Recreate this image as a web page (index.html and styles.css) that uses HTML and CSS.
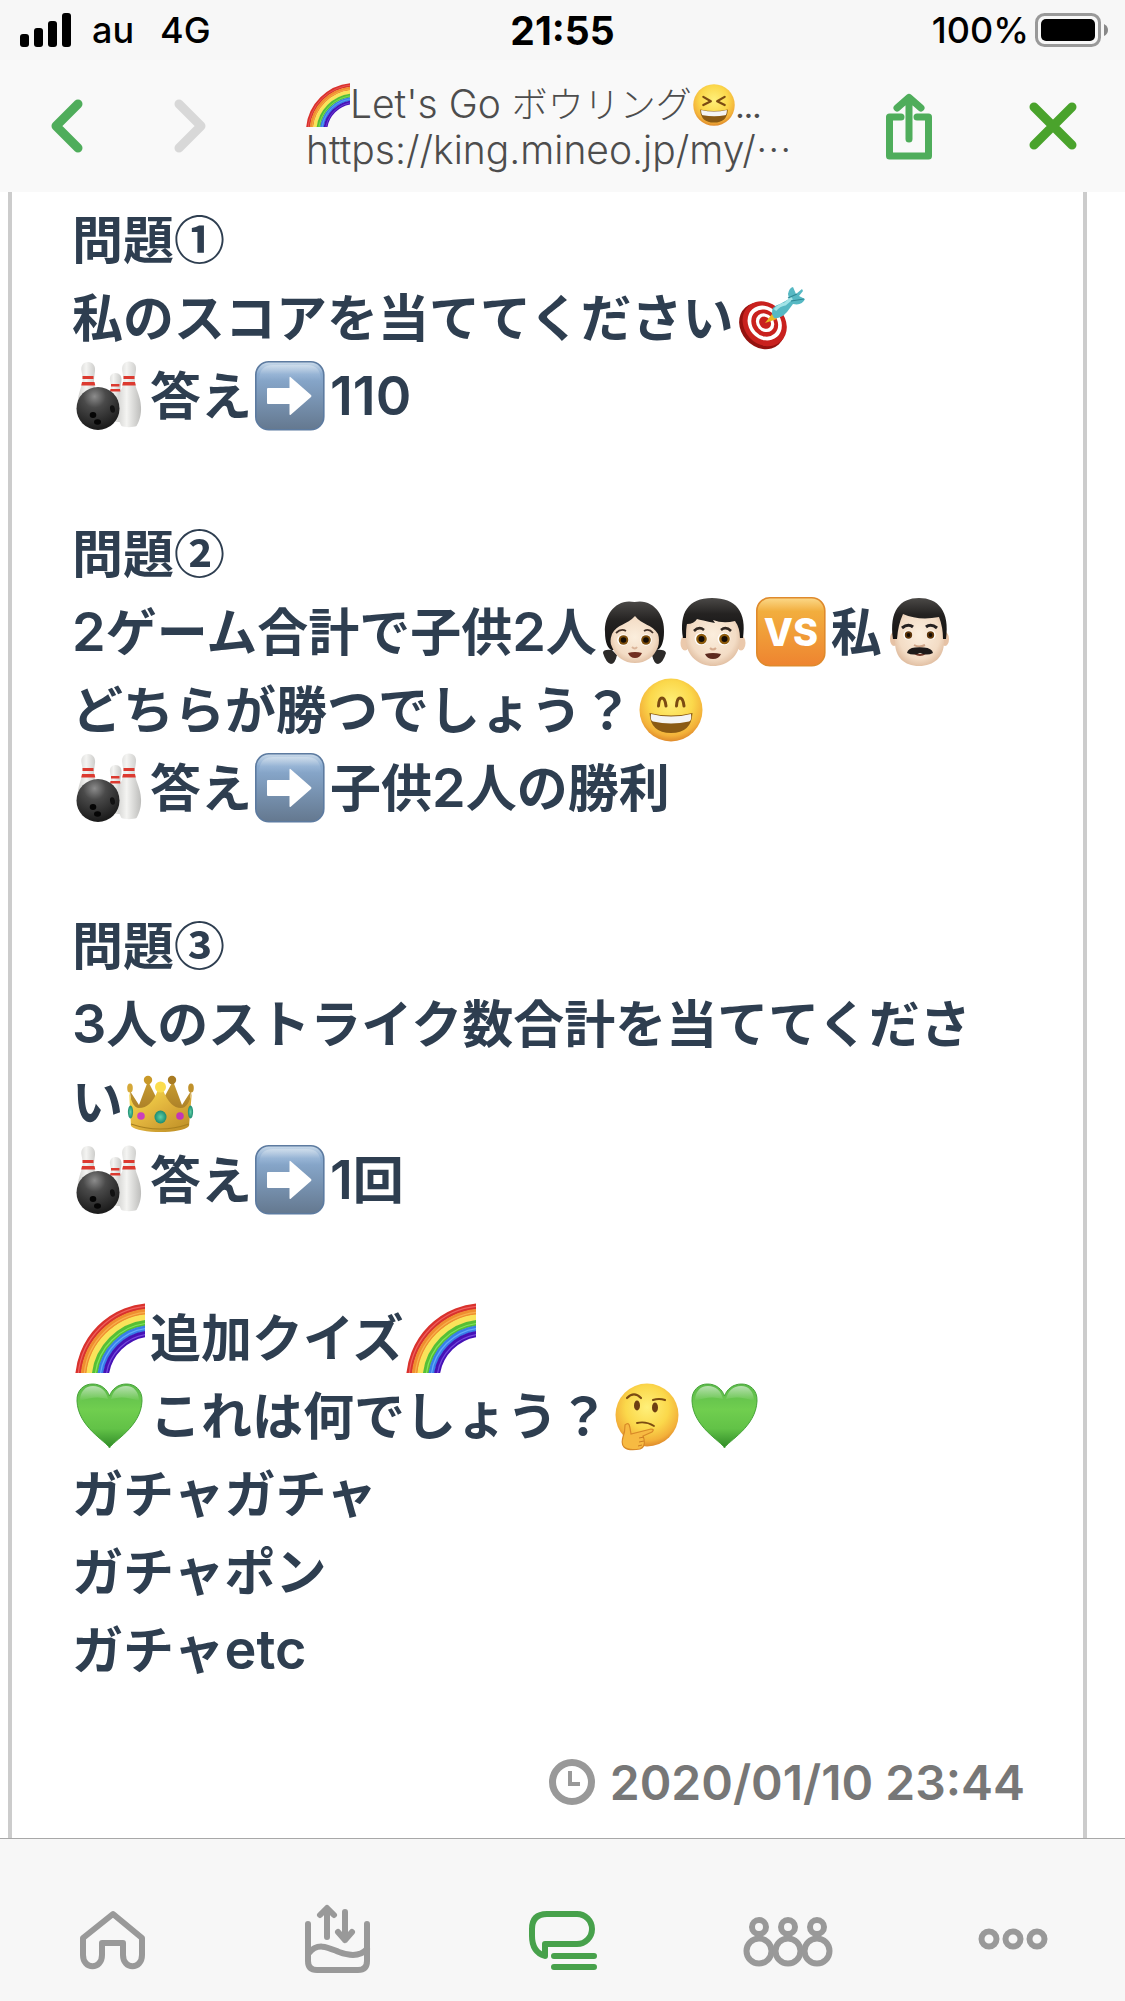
FILE: index.html
```html
<!DOCTYPE html>
<html lang="ja">
<head>
    <meta charset="UTF-8">
    <meta name="viewport" content="width=device-width, initial-scale=1.0">
    <title>Let's Go ボウリング</title>
    <link rel="stylesheet" href="styles.css">
</head>
<body>

    <!-- Emoji sprite -->
    <svg class="sprite" aria-hidden="true">
        <defs>
            <linearGradient id="gPin" x1="0" x2="1"><stop offset="0" stop-color="#d2d2d0"/><stop offset=".4" stop-color="#f4f4f2"/><stop offset="1" stop-color="#bdbdbb"/></linearGradient>
            <radialGradient id="gBall" cx=".42" cy=".22" r=".75"><stop offset="0" stop-color="#8c8c8c"/><stop offset=".35" stop-color="#4a4a4a"/><stop offset="1" stop-color="#1c1c1c"/></radialGradient>
            <linearGradient id="gBlue" x2="0" y2="1"><stop offset="0" stop-color="#cbdbea"/><stop offset=".18" stop-color="#8aabd0"/><stop offset="1" stop-color="#64788f"/></linearGradient>
            <linearGradient id="gOrange" x2="0" y2="1"><stop offset="0" stop-color="#fbd98a"/><stop offset=".2" stop-color="#f2ae3e"/><stop offset="1" stop-color="#ee8430"/></linearGradient>
            <radialGradient id="gFace" cx=".5" cy=".38" r=".62"><stop offset="0" stop-color="#fff07a"/><stop offset=".55" stop-color="#fbd84b"/><stop offset=".85" stop-color="#f3b13a"/><stop offset="1" stop-color="#df8a2b"/></radialGradient>
            <radialGradient id="gSkin" cx=".5" cy=".45" r=".6"><stop offset="0" stop-color="#fbeedd"/><stop offset=".7" stop-color="#f3dcc5"/><stop offset="1" stop-color="#dcb799"/></radialGradient>
            <linearGradient id="gHair" x2="0" y2="1"><stop offset="0" stop-color="#4b4947"/><stop offset=".4" stop-color="#242221"/><stop offset="1" stop-color="#131212"/></linearGradient>
            <linearGradient id="gHeart" x2="0" y2="1"><stop offset="0" stop-color="#5cba4b"/><stop offset=".4" stop-color="#70ce4f"/><stop offset=".7" stop-color="#62c247"/><stop offset="1" stop-color="#2f8a27"/></linearGradient>
            <linearGradient id="gShine" x2="0" y2="1"><stop offset="0" stop-color="#fff" stop-opacity=".8"/><stop offset="1" stop-color="#fff" stop-opacity="0"/></linearGradient>
            <linearGradient id="gGold" x2="1" y2="1"><stop offset="0" stop-color="#fbe04e"/><stop offset=".5" stop-color="#dfb13c"/><stop offset="1" stop-color="#b98a22"/></linearGradient>
            <linearGradient id="gGoldDark" x2="0" y2="1"><stop offset="0" stop-color="#c99d31"/><stop offset="1" stop-color="#9c7123"/></linearGradient>
            <radialGradient id="gGem"><stop offset="0" stop-color="#5fd0a8"/><stop offset="1" stop-color="#1d8b70"/></radialGradient>
        </defs>

        <symbol id="bowling" viewBox="0 0 70 70">
            <g fill="url(#gPin)">
                <path d="M13 1C8 1 5.500 5 6.500 10c.7 4 1.500 7 1 11C6 28 2 34 3 46c.5 7 2 12 4 17h13c3-8 5-18 3-27-1.500-6-4-10-4-15s.5-7 1-11c.7-5-2-9-7-9z"/>
                <path d="M40.500 12c-4 0-6 3-5.500 7 .5 3 1.200 6 .8 9-1 6-4.800 12-3.800 21 .5 6 2 10 3 12h10c3-5 4-12 3-19-1-6-3-10-2.500-15 .3-3 .8-5 1-8 .3-4-2-7-6-7z"/>
                <path d="M54 .5c-5 0-7.500 4-6.800 9 .6 5 1.800 8 1 13C47 29 42 35 42 47c0 8 2.500 14 4.500 18 3 1.500 12 1.500 15 0 2.500-4 5-11 4.500-19-.4-11-5-17-6-24-.6-5 .4-8 1-13 .6-5-2-8.500-7-8.500z"/>
            </g>
            <path d="M7.500 15h11v3h-11zM7 21h12.500l.8 3.500H6.200zM36 23h8.500v2.500H36zM35.500 28h9.500l.5 2.500H35zM48.500 15h11v3h-11zM48 21h12l.8 3.500H47.200z" fill="#dc3a30"/>
            <circle cx="23" cy="47.500" r="21.500" fill="url(#gBall)"/>
            <ellipse cx="18" cy="54" rx="3.300" ry="3" fill="#050505"/><ellipse cx="22.500" cy="61" rx="3.500" ry="2.700" fill="#050505"/><ellipse cx="37.500" cy="48" rx="2.400" ry="3.800" fill="#111" transform="rotate(-12 37.500 48)"/>
        </symbol>

        <symbol id="arrow" viewBox="0 0 70 70">
            <rect x=".8" y=".8" width="68" height="68" rx="13" fill="url(#gBlue)" stroke="#5d7ba0" stroke-width="1.600"/>
            <path d="M4 20Q4 4 18 4h34q14 0 14 16z" fill="url(#gShine)" opacity=".35"/>
            <path d="M13 27h21.500V17q0-2 1.500-.5L56 34q1 1 0 2L36 53.500q-1.500 1.300-1.500-.5V43H13q-1 0-1-1V28q0-1 1-1z" fill="#fff"/>
        </symbol>

        <symbol id="target" viewBox="0 0 70 70">
            <ellipse cx="26" cy="43" rx="21" ry="25" fill="#94120f" transform="rotate(-42 26 43)"/>
            <g transform="translate(1 5) rotate(-42 27 35)">
                <ellipse cx="27" cy="36" rx="20.500" ry="24" fill="#c9211e"/>
                <ellipse cx="27.500" cy="35.500" rx="16" ry="18.500" fill="#fff"/>
                <ellipse cx="27.500" cy="35.500" rx="12.500" ry="14.500" fill="#c9211e"/>
                <ellipse cx="28" cy="35.500" rx="8.500" ry="10" fill="#fff"/>
                <ellipse cx="28" cy="35.500" rx="5.500" ry="6.500" fill="#c9211e"/>
            </g>
            <path d="M29 40l7-9 5 5z" fill="#e9b824"/>
            <path d="M36 31q-1-8 8-10l9-5-1-5q1-6 5-7l3 7 6-5 1 2-4 5 6 3q-3 7-12 5l-6 8q-6 7-13 6z" fill="#56b8c3"/>
            <path d="M39 27q4-5 10-6l7-6" stroke="#a2e4e7" stroke-width="3" fill="none"/>
            <path d="M52 15l9-4M55 18l13-2" stroke="#2e8995" stroke-width="1.200"/>
        </symbol>

        <symbol id="rainbow" viewBox="0 0 70 70">
            <g fill="none" stroke-width="6">
                <circle cx="78" cy="78" r="75" stroke="#d9322d"/>
                <circle cx="78" cy="78" r="69.500" stroke="#ef8f2f"/>
                <circle cx="78" cy="78" r="64" stroke="#fae35a"/>
                <circle cx="78" cy="78" r="58.500" stroke="#56bf35"/>
                <circle cx="78" cy="78" r="53" stroke="#377fe8"/>
                <circle cx="78" cy="78" r="47.500" stroke="#4612b6"/>
                <g stroke-width="1.200">
                    <circle cx="78" cy="78" r="75" stroke="#ee605f"/>
                    <circle cx="78" cy="78" r="69" stroke="#f8b04e"/>
                    <circle cx="78" cy="78" r="58" stroke="#82e55b"/>
                    <circle cx="78" cy="78" r="53" stroke="#64a8fa"/>
                    <circle cx="78" cy="78" r="47" stroke="#7648dd"/>
                </g>
            </g>
        </symbol>

        <symbol id="heart" viewBox="0 0 70 70">
            <path d="M34.500 67C31 60 3 46 2 20 1.500 9 9 3 17.500 3 26 3 32 8 34.500 15 37 8 43 3 51.500 3 60 3 67.500 9 67 20 66 46 38 60 34.500 67z" fill="url(#gHeart)" stroke="#46a338" stroke-width="1"/>
            <path d="M5 20C5 11 10 5 18 5s13 5 15 13q-13-4-28 2zM64 20C64 11 59 5 51 5s-13 5-15 13q13-4 28 2z" fill="url(#gShine)" opacity=".7"/>
        </symbol>

        <symbol id="grin" viewBox="0 0 70 70">
            <circle cx="35" cy="35" r="31.500" fill="url(#gFace)"/>
            <path d="M22.500 31q.5-8 3.500-8t4 8M40.500 31q.5-8 3.500-8t4 8" fill="none" stroke="#7b4b12" stroke-width="3" stroke-linecap="round"/>
            <path d="M13.500 38q21.500 5 43 0-1 20-21.500 20T13.500 38z" fill="#8a5a14"/>
            <path d="M15 39q20 5 40 0 1 7-2 7.500-18 4-36 0-3-.5-2-7.500z" fill="#f4f4f4"/>
        </symbol>

        <symbol id="laugh" viewBox="0 0 70 70">
            <circle cx="35" cy="35" r="33" fill="url(#gFace)"/>
            <path d="M18 22l12 7-12 6M52 22l-12 7 12 6" fill="none" stroke="#7b4b12" stroke-width="3.500" stroke-linecap="round" stroke-linejoin="round"/>
            <path d="M13 42q22 5 44 0-1 21-22 21T13 42z" fill="#8a5a14"/>
            <path d="M14.500 43q20.500 5 41 0 0 8-3 8.500-17 3-35 0-3-.5-3-8.500z" fill="#f4f4f4"/>
        </symbol>

        <symbol id="think" viewBox="0 0 70 70">
            <circle cx="35" cy="34" r="31.500" fill="url(#gFace)"/>
            <path d="M15 17q7-7 14 0M41 19q6-2 12 0" fill="none" stroke="#7b4b12" stroke-width="2.200" stroke-linecap="round"/>
            <ellipse cx="25" cy="24.500" rx="3" ry="5" fill="#6d3e12"/><ellipse cx="43" cy="26.500" rx="3" ry="5" fill="#6d3e12"/>
            <path d="M25 42q9-2 17 3" fill="none" stroke="#7b4b12" stroke-width="1.800" stroke-linecap="round"/>
            <path d="M13 44q4-4 5 3l1 6 20-5q4 0 1 3l-9 4q4 10-3 13-12 2-16-2-3-3-1-10 2-5 2-12z" fill="#f7ba42" stroke="#d88a28" stroke-width="1.200"/>
            <path d="M27 57l5-1M27 61l5-1M26 65l4-1" stroke="#cc7d25" stroke-width="1"/>
        </symbol>

        <symbol id="girl" viewBox="0 0 70 70">
            <path d="M12 53Q3 52 3 56q3 10 8 11 4 0 6-9zM56 53q9-1 10 3-3 10-8 11-4 0-6-9z" fill="#2c2a29"/>
            <path d="M34.500 5C16 1 4 18 5 35c0 11 3 17 7 18h45c4-1 7-8 7-18C65 18 53 1 34.500 5z" fill="url(#gHair)"/>
            <path d="M35 19C27 28 17 27 12 37q-3 8 0 13c4 10 12 16 23 16s19-6 23-16q2-7 0-13C52 27 42 28 35 19z" fill="url(#gSkin)"/>
            <path d="M16 36q5-5 10-2M44 34q5-3 9 2" stroke="#44332a" stroke-width="1.800" fill="none"/>
            <circle cx="23" cy="43" r="5.800" fill="#fff"/><circle cx="46" cy="43" r="5.800" fill="#fff"/>
            <circle cx="23.500" cy="43" r="4.800" fill="#7b4c0a"/><circle cx="46" cy="43" r="4.800" fill="#7b4c0a"/>
            <circle cx="23.500" cy="43" r="2.800" fill="#140c04"/><circle cx="46" cy="43" r="2.800" fill="#140c04"/>
            <path d="M32 50q3 3 5 0" stroke="#dbb59a" stroke-width="2" fill="none"/>
            <path d="M28 56q7-2 14 0-2 5-7 5t-7-5z" fill="#712e20"/>
        </symbol>

        <symbol id="boy" viewBox="0 0 70 70">
            <ellipse cx="7" cy="46" rx="4.500" ry="7.500" fill="#ebc9ac"/><ellipse cx="63" cy="46" rx="4.500" ry="7.500" fill="#ebc9ac"/>
            <path d="M8 33C8 20 20 12 35 12s27 8 27 21v10c0 16-13 26-27 26S8 59 8 43z" fill="url(#gSkin)"/>
            <path d="M5 41C1 16 10 1 34 1s35 14 31 40h-3q0-10-5-17-12 3-22-1l2 3q-14-3-18-4-3 5-10 5-1 4-1 14z" fill="url(#gHair)"/>
            <path d="M16 34q5-5 10-1M43 33q5-4 10 1" stroke="#322822" stroke-width="2.600" fill="none"/>
            <circle cx="23" cy="42" r="6.300" fill="#fff"/><circle cx="46" cy="42" r="6.300" fill="#fff"/>
            <circle cx="23.500" cy="42" r="5.300" fill="#8c5a0b"/><circle cx="46.500" cy="42" r="5.300" fill="#8c5a0b"/>
            <circle cx="23.500" cy="42" r="3" fill="#140c04"/><circle cx="46.500" cy="42" r="3" fill="#140c04"/>
            <path d="M32 51q3 3 6 0" stroke="#d6ac8f" stroke-width="2" fill="none"/>
            <path d="M27 57q8-2 16 0-2 5-8 5t-8-5z" fill="#5c2a1f"/>
        </symbol>

        <symbol id="man" viewBox="0 0 70 70">
            <ellipse cx="9" cy="42" rx="4" ry="7" fill="#e6c2a5"/><ellipse cx="60" cy="42" rx="4" ry="7" fill="#e6c2a5"/>
            <path d="M10 25q2-13 24-13t25 13v20c0 15-10 24-25 24S10 60 10 45z" fill="url(#gSkin)"/>
            <path d="M8 42C4 14 15 1 34 1s31 13 27 41h-3q0-12-4-22-20 4-36-3-5 11-6 25z" fill="url(#gHair)"/>
            <path d="M17 31q6-5 11-1M41 30q5-4 11 1" stroke="#262120" stroke-width="3" fill="none"/>
            <circle cx="23" cy="38" r="4.600" fill="#fff"/><circle cx="46" cy="38" r="4.600" fill="#fff"/>
            <circle cx="23.500" cy="38" r="3.700" fill="#61370a"/><circle cx="45.500" cy="38" r="3.700" fill="#61370a"/>
            <circle cx="23.500" cy="38" r="1.900" fill="#140c04"/><circle cx="45.500" cy="38" r="1.900" fill="#140c04"/>
            <path d="M29 48q5 3 11 0" stroke="#cda386" stroke-width="2" fill="none"/>
            <path d="M29 57q6 4 12 0z" fill="#6c3526"/>
            <path d="M22 56q1-5 8-5.500 5-.5 9 0Q47 51 48 56q-6 3-13 0-6 3-13 0z" fill="#1d1a19"/>
        </symbol>

        <symbol id="crown" viewBox="0 0 70 70">
            <g transform="translate(0 7)">
                <path d="M4 17l9 14 9-24 12 24L47 7l9 24 9-14-3 33H7z" fill="url(#gGoldDark)"/>
                <circle cx="22" cy="6" r="4.200" fill="#c99928"/><circle cx="46" cy="6" r="4.200" fill="#a87b22"/>
                <ellipse cx="4" cy="14" rx="2.800" ry="4.500" fill="#d5a838"/><ellipse cx="65" cy="14" rx="2.800" ry="4.500" fill="#c0912b"/>
                <path d="M3 17q3 17 10 17 12 0 19-18h5q7 18 18 18 8 0 11-17l-3 35c-7 8-50 8-58 0z" fill="url(#gGold)"/>
                <circle cx="34.500" cy="13" r="5.500" fill="#fbdd4e"/>
                <path d="M5 50q29 10 58 0" stroke="#a9801f" stroke-width="1.200" fill="none"/>
                <ellipse cx="34.500" cy="43" rx="6" ry="6.500" fill="url(#gGem)"/>
                <ellipse cx="4.500" cy="38" rx="2.600" ry="6.500" fill="url(#gGem)"/><ellipse cx="64.500" cy="38" rx="2.600" ry="6.500" fill="url(#gGem)"/>
                <circle cx="15" cy="42" r="3.800" fill="#cc3fbd"/><circle cx="54" cy="42" r="3.800" fill="#c336b6"/>
            </g>
        </symbol>
    </svg>

    <!-- Status bar -->
    <div class="status-bar">
        <div class="status-left">
            <svg class="signal" viewBox="0 0 52 34" aria-hidden="true">
                <rect x="0" y="21" width="9" height="13" rx="3"/>
                <rect x="14" y="15" width="9" height="19" rx="3"/>
                <rect x="28" y="8" width="9" height="26" rx="3"/>
                <rect x="42" y="0" width="9" height="34" rx="3"/>
            </svg>
            <span class="carrier">au</span>
            <span>4G</span>
        </div>
        <div class="clock">21:55</div>
        <div class="status-right">
            <span>100%</span>
            <svg class="battery" viewBox="0 0 74 34" aria-hidden="true">
                <rect x="1.500" y="1.500" width="63" height="31" rx="8" fill="none" stroke="#999" stroke-width="3"/>
                <rect x="6" y="6" width="54" height="22" rx="5"/>
                <path d="M69 11q4 2 4 6t-4 6z" fill="#888"/>
            </svg>
        </div>
    </div>

    <!-- Browser bar -->
    <header class="nav-bar">
        <button type="button" class="nav-button" aria-label="戻る">
            <svg width="34" height="58" viewBox="0 0 34 58"><path d="M28 7L6 29l22 22" stroke="#4fad5b"/></svg>
        </button>
        <button type="button" class="nav-button" aria-label="進む" disabled>
            <svg width="34" height="58" viewBox="0 0 34 58"><path d="M5 7l22 22L5 51" stroke="#d8d8d8"/></svg>
        </button>
        <div class="page-info">
            <h1 class="page-title"><svg class="mini-emoji" role="img" aria-label="虹"><use href="#rainbow"/></svg><span class="latin">Let's Go </span>ボウリング<svg class="mini-emoji" role="img" aria-label="笑顔"><use href="#laugh"/></svg><b>…</b></h1>
            <p class="page-url"><span class="latin">https://king.mineo.jp/my/</span><span class="cjk">…</span></p>
        </div>
        <button type="button" class="nav-button wide" aria-label="共有">
            <svg width="48" height="68" viewBox="0 0 48 68">
                <path class="share" d="M16 25H4.500v39h39V25H32M24 47V6M12 16L24 5.500 36 16" stroke="#4fad5b"/>
            </svg>
        </button>
        <button type="button" class="nav-button wide" aria-label="閉じる">
            <svg width="50" height="50" viewBox="0 0 50 50"><path d="M6 6l38 38M44 6L6 44" stroke="#4aa32c"/></svg>
        </button>
    </header>

    <main class="content">
        <article class="post">
            <p>
                問題<span class="cjk">①</span><br>
                私のスコアを当ててください<svg class="emoji" role="img" aria-label="的"><use href="#target"/></svg><br>
                <svg class="emoji" role="img" aria-label="ボウリング"><use href="#bowling"/></svg>答え<svg class="emoji" role="img" aria-label="右矢印"><use href="#arrow"/></svg><span class="num">110</span>
            </p>
            <p>
                問題<span class="cjk">②</span><br>
                <span class="num">2</span>ゲーム合計で子供<span class="num">2</span>人<svg class="emoji" role="img" aria-label="女の子"><use href="#girl"/></svg><svg class="emoji" role="img" aria-label="男の子"><use href="#boy"/></svg><svg class="emoji" viewBox="0 0 70 70"><rect x=".8" y=".8" width="68" height="68" rx="13" fill="url(#gOrange)" stroke="#df8a2c" stroke-width="1.600"/><text x="35" y="49" text-anchor="middle" class="vs-text">VS</text></svg>私<svg class="emoji" role="img" aria-label="男性"><use href="#man"/></svg><br>
                どちらが勝つでしょう？<svg class="emoji" role="img" aria-label="笑顔"><use href="#grin"/></svg><br>
                <svg class="emoji" role="img" aria-label="ボウリング"><use href="#bowling"/></svg>答え<svg class="emoji" role="img" aria-label="右矢印"><use href="#arrow"/></svg>子供<span class="num">2</span>人の勝利
            </p>
            <p>
                問題<span class="cjk">③</span><br>
                <span class="num">3</span>人のストライク数合計を当ててください<svg class="emoji" role="img" aria-label="王冠"><use href="#crown"/></svg><br>
                <svg class="emoji" role="img" aria-label="ボウリング"><use href="#bowling"/></svg>答え<svg class="emoji" role="img" aria-label="右矢印"><use href="#arrow"/></svg><span class="num">1</span>回
            </p>
            <p>
                <svg class="emoji" role="img" aria-label="虹"><use href="#rainbow"/></svg>追加クイズ<svg class="emoji" role="img" aria-label="虹"><use href="#rainbow"/></svg><br>
                <svg class="emoji" role="img" aria-label="ハート"><use href="#heart"/></svg>これは何でしょう？<svg class="emoji" role="img" aria-label="考える顔"><use href="#think"/></svg><svg class="emoji" role="img" aria-label="ハート"><use href="#heart"/></svg><br>
                ガチャガチャ<br>
                ガチャポン<br>
                ガチャ<span class="num">etc</span>
            </p>
            <div class="post-date">
                <svg width="48" height="48" viewBox="0 0 48 48" aria-hidden="true">
                    <circle cx="24" cy="23" r="19.500" fill="none" stroke="#999" stroke-width="7"/>
                    <path d="M22 12v13h10" fill="none" stroke="#999" stroke-width="4"/>
                </svg>
                <time datetime="2020-01-10T23:44">2020/01/10 23:44</time>
            </div>
        </article>
    </main>

    <!-- Tab bar -->
    <nav class="tab-bar">
        <a href="#" class="tab" aria-label="ホーム">
            <svg width="68" height="72" viewBox="0 0 68 72">
                <path d="M34 10L4 34v17c0 15 19 15 19 0V39h21v12c0 15 19 15 19 0V34z"/>
            </svg>
        </a>
        <a href="#" class="tab" aria-label="パケット">
            <svg width="68" height="72" viewBox="0 0 68 72">
                <path d="M4 20v37q0 9 9 9h41q9 0 9-9V20M5 49c9-12 22-4 30-1s20 6 28-3M23 33V5M16 11l7-7 7 7M41 8v28M34 28l7 8 7-8"/>
            </svg>
        </a>
        <a href="#" class="tab active" aria-label="掲示板">
            <svg width="72" height="72" viewBox="0 0 72 72">
                <path d="M20 10h30a15 15 0 0 1 0 30H18v12Q5 48 5 32V25Q5 10 20 10zM27 52h40M27 63h40"/>
            </svg>
        </a>
        <a href="#" class="tab" aria-label="コミュニティ">
            <svg width="90" height="72" viewBox="0 0 90 72">
                <circle cx="16" cy="23" r="7"/><circle cx="45" cy="23" r="7"/><circle cx="74" cy="23" r="7"/>
                <circle cx="16" cy="47" r="12.500"/><circle cx="45" cy="47" r="12.500"/><circle cx="74" cy="47" r="12.500"/>
            </svg>
        </a>
        <a href="#" class="tab" aria-label="その他">
            <svg width="72" height="72" viewBox="0 0 72 72">
                <circle cx="12" cy="35" r="7.500"/><circle cx="36" cy="35" r="7.500"/><circle cx="60" cy="35" r="7.500"/>
            </svg>
        </a>
    </nav>

</body>
</html>
```

FILE: styles.css
```css
* {
    box-sizing: border-box;
}
body {
    font-family: Inter, "Noto Sans CJK JP", sans-serif;
    background: #fff;
    color: #2e3e50;
    margin: 0;
    min-height: 100vh;
    display: flex;
    flex-direction: column;
}
h1, p {
    margin: 0;
}
.sprite {
    position: absolute;
    width: 0;
    height: 0;
}
.cjk {
    font-family: "Noto Sans CJK JP", sans-serif;
    line-height: 1;
}

/* status bar */
.status-bar {
    display: grid;
    grid-template-columns: 1fr auto 1fr;
    align-items: center;
    height: 60px;
    padding: 0 16px;
    background: #f7f7f7;
    color: #000;
    font-size: 36px;
    font-weight: 500;
}
.status-left {
    display: flex;
    align-items: center;
    padding-left: 4px;
}
.signal {
    width: 52px;
    height: 34px;
    margin-right: 20px;
}
.carrier {
    margin-right: 26px;
}
.clock {
    font-size: 39px;
    font-weight: 700;
}
.status-right {
    display: flex;
    align-items: center;
    justify-content: flex-end;
    gap: 6px;
}
.battery {
    width: 74px;
    height: 34px;
}

/* browser bar */
.nav-bar {
    display: flex;
    align-items: center;
    height: 132px;
    padding-left: 5px;
    background: #f9f9f9;
}
.nav-button {
    width: 124px;
    height: 132px;
    padding: 0;
    border: none;
    background: none;
    display: flex;
    align-items: center;
    justify-content: center;
    cursor: pointer;
}
.nav-button.wide {
    width: 144px;
}
.nav-button path {
    fill: none;
    stroke-width: 9;
    stroke-linecap: round;
    stroke-linejoin: round;
}
.nav-button .share {
    stroke-width: 7;
}
.page-info {
    flex: 1;
    min-width: 0;
    margin-left: 53px;
    padding-top: 4px;
    color: #4d4d4d;
    line-height: 46px;
    white-space: nowrap;
}
.page-title, .page-url {
    font-size: 36px;
    font-weight: 300;
}
.latin {
    font-size: 39px;
    line-height: 1;
}
.page-title b {
    font-size: 24px;
    font-weight: 800;
    line-height: 1;
}
.mini-emoji {
    width: 44px;
    height: 44px;
    vertical-align: -9px;
}

/* post */
.content {
    flex: 1;
    display: flex;
}
.post {
    flex: 1;
    margin: 0 38px 0 8px;
    padding: 10px 58px 0 60px;
    border: solid #ccc;
    border-width: 0 4px;
    font-size: 51px;
    font-weight: 600;
    line-height: 78px;
}
.post p {
    padding-right: 20px;
}
.post p + p {
    margin-top: 80px;
}
.num {
    font-size: 54px;
    line-height: 1;
}
.emoji {
    width: 70px;
    height: 70px;
    margin: 0 5px 0 3px;
    vertical-align: -16px;
}
.vs-text {
    font-family: Inter, sans-serif;
    font-size: 38px;
    font-weight: 800;
    fill: #fff;
}
.post-date {
    display: flex;
    align-items: center;
    justify-content: flex-end;
    gap: 14px;
    margin-top: 54px;
    color: #777;
    font-size: 48px;
}

/* tab bar */
.tab-bar {
    display: flex;
    height: 163px;
    padding-top: 65px;
    background: #f7f7f7;
    border-top: 1px solid #a8a8a8;
}
.tab {
    flex: 1;
    display: flex;
    justify-content: center;
    color: #999;
}
.tab.active {
    color: #47a14b;
}
.tab svg {
    fill: none;
    stroke: currentColor;
    stroke-width: 6;
    stroke-linecap: round;
    stroke-linejoin: round;
}
```
